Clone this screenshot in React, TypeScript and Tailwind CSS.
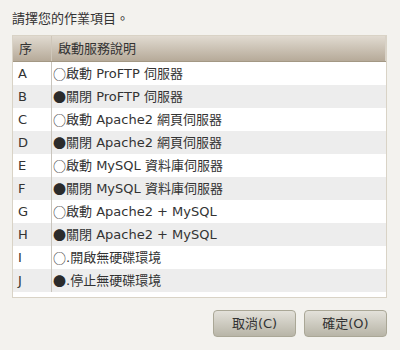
import React from "react";

const rows: [string, string, string][] = [
  ["A", "○", "啟動 ProFTP 伺服器"],
  ["B", "●", "關閉 ProFTP 伺服器"],
  ["C", "○", "啟動 Apache2 網頁伺服器"],
  ["D", "●", "關閉 Apache2 網頁伺服器"],
  ["E", "○", "啟動 MySQL 資料庫伺服器"],
  ["F", "●", "關閉 MySQL 資料庫伺服器"],
  ["G", "○", "啟動 Apache2 + MySQL"],
  ["H", "●", "關閉 Apache2 + MySQL"],
  ["I", "○", ".開啟無硬碟環境"],
  ["J", "●", ".停止無硬碟環境"],
];

export default function App() {
  return (
    <div
      className="w-[400px] h-[350px] bg-[#f3f2ee] text-[#333333] text-[13px] flex flex-col"
      style={{ fontFamily: '"DejaVu Sans", "Noto Sans CJK TC", sans-serif' }}
    >
      <div className="pl-[12px] pt-[10px] h-[35px] leading-[18px]">請擇您的作業項目。</div>
      <div className="ml-[12px] w-[375px] h-[263px] border border-[#d9d3c6] bg-white flex flex-col">
        <div className="flex h-[26px] bg-gradient-to-b from-[#e1dbd1] to-[#b6aa99] border-b border-[#a39884] shrink-0">
          <div className="w-[39px] pl-[6px] leading-[26px] border-r border-[#cfc7ba]">序</div>
          <div className="flex-1 pl-[6px] leading-[26px] border-r border-[#d8d2c8]">啟動服務說明</div>
        </div>
        {rows.map(([k, c, v], i) => (
          <div key={k} className={`flex h-[23px] ${i % 2 === 1 ? "bg-[#ededed]" : "bg-white"}`}>
            <div className="w-[39px] pl-[5px] leading-[23px] border-r border-[#c9c5bd]">{k}</div>
            <div className="flex-1 pl-[1px] leading-[23px] whitespace-pre flex items-center">
              <span
                className="text-[13px] leading-[23px] text-[#2b2b2b]"
                style={{ fontFamily: '"Noto Sans CJK TC", sans-serif' }}
              >
                {c}
              </span>
              <span>{v}</span>
            </div>
          </div>
        ))}
      </div>
      <div className="flex justify-end gap-[8px] pr-[13px] pt-[12px]">
        <button className="w-[83px] h-[27px] rounded-[4px] border border-[#aaa796] bg-gradient-to-b from-[#e3e1da] to-[#b8b5a7] text-[#333]">
          取消(C)
        </button>
        <button className="w-[83px] h-[27px] rounded-[4px] border border-[#aaa796] bg-gradient-to-b from-[#e3e1da] to-[#b8b5a7] text-[#333]">
          確定(O)
        </button>
      </div>
    </div>
  );
}
